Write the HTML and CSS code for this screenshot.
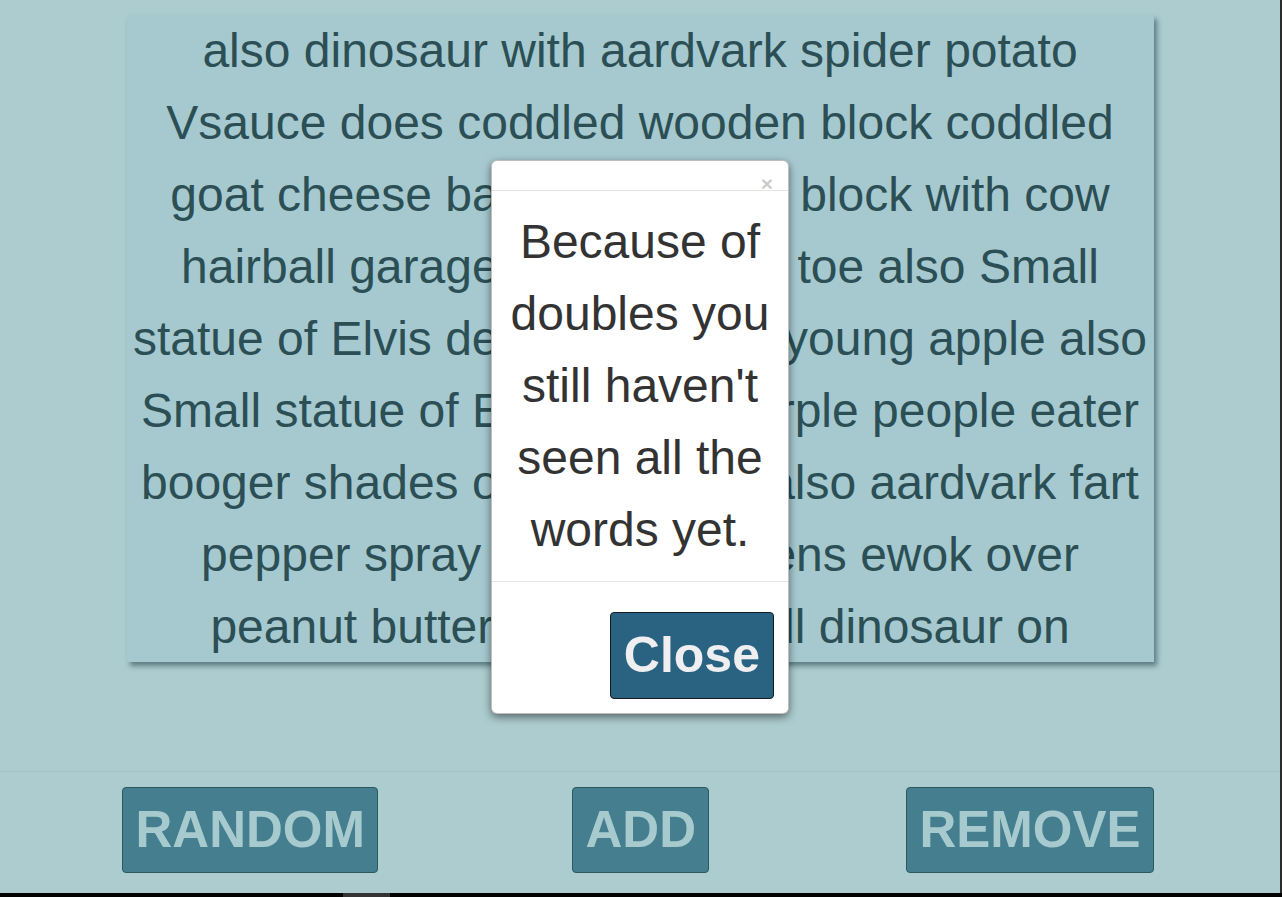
FILE: index.html
```html
<!DOCTYPE html>
<html lang="en">
<head>
<meta charset="utf-8">
<title>Words</title>
<link rel="stylesheet" href="styles.css">
</head>
<body>
  <div class="screen">
    <div class="app">
      <main class="stage">
        <div class="words">
          <div class="line">also dinosaur with aardvark spider potato</div>
          <div class="line">Vsauce does coddled wooden block coddled</div>
          <div class="line">goat cheese banana wooden block with cow</div>
          <div class="line">hairball garage door with big toe also Small</div>
          <div class="line">statue of Elvis deluxe eating a young apple also</div>
          <div class="line">Small statue of Elvis with a purple people eater</div>
          <div class="line">booger shades of grey green also aardvark fart</div>
          <div class="line">pepper spray and six chickens ewok over</div>
          <div class="line">peanut butter over the small dinosaur on</div>
          <div class="line">wooden block with coddled goat cheese</div>
        </div>
      </main>
      <nav class="controls">
        <button class="btn" type="button">RANDOM</button>
        <button class="btn" type="button">ADD</button>
        <button class="btn" type="button">REMOVE</button>
      </nav>
    </div>
    <div class="edge"></div>
  </div>
  <div class="hbar"><span class="thumb"></span></div>

  <div class="modal" role="dialog">
    <div class="modal-header"><span class="close">&times;</span></div>
    <div class="modal-body">Because of doubles you still haven't seen all the words yet.</div>
    <div class="modal-footer"><button class="close-btn" type="button">Close</button></div>
  </div>
</body>
</html>
```

FILE: styles.css
```css
html, body {
  margin: 0;
  height: 897px;
  overflow: hidden;
}

body {
  font-family: "Liberation Sans", Arial, sans-serif;
  background: #000;
  display: flex;
  flex-direction: column;
}

.screen {
  display: flex;
  height: 893px;
}

.app {
  flex: 1;
  background: #adcccf;
  display: flex;
  flex-direction: column;
}

.stage {
  height: 756px;
  padding-top: 15px;
  border-bottom: 1px solid #a2c2c5;
}

.words {
  width: 1027px;
  height: 647px;
  margin: 0 auto;
  background: #a6c9cf;
  box-shadow: 3px 4px 5px rgba(30, 60, 65, 0.55);
  overflow: hidden;
  color: #2b4f55;
  font-size: 48px;
  line-height: 72px;
  text-align: center;
}

.line {
  white-space: nowrap;
}

.controls {
  display: flex;
  justify-content: space-between;
  padding: 15px 126px 20px 122px;
}

.btn {
  height: 86px;
  box-sizing: border-box;
  padding: 0 12.5px;
  border: 1px solid #2b5a5e;
  border-radius: 4px;
  background: #447e8f;
  color: #a6cacd;
  font-family: "Liberation Sans", Arial, sans-serif;
  font-weight: bold;
  font-size: 51px;
  line-height: 84px;
}

.btn + .btn {
  margin-right: 3px;
}

.btn + .btn + .btn {
  margin-right: 0;
}

.edge {
  width: 2px;
  background: #2b2b2b;
}

.hbar {
  height: 4px;
  background: #000;
  display: flex;
}

.thumb {
  width: 47px;
  margin-left: 343px;
  background: #333;
}

.modal {
  position: absolute;
  top: 160px;
  left: 491px;
  width: 298px;
  box-sizing: border-box;
  background: #fff;
  border: 1px solid rgba(0, 0, 0, 0.25);
  border-radius: 6px;
  box-shadow: 0 3px 9px rgba(0, 0, 0, 0.5);
}

.modal-header {
  height: 30px;
  box-sizing: border-box;
  padding: 12px 15px 0;
  display: flex;
  justify-content: flex-end;
  border-bottom: 1px solid #e5e5e5;
}

.close {
  font-size: 21px;
  line-height: 21px;
  font-weight: bold;
  color: #000;
  opacity: 0.2;
}

.modal-body {
  padding: 15px;
  text-align: center;
  color: #333;
  font-size: 48px;
  line-height: 72px;
}

.modal-footer {
  border-top: 1px solid #e5e5e5;
  padding: 30px 14px 14px;
  display: flex;
  justify-content: flex-end;
}

.close-btn {
  height: 87px;
  box-sizing: border-box;
  padding: 0 13px;
  border: 1px solid #151b1e;
  border-radius: 4px;
  background: #2a6381;
  color: #efeef0;
  font-family: "Liberation Sans", Arial, sans-serif;
  font-weight: bold;
  font-size: 50px;
  line-height: 85px;
}
```
